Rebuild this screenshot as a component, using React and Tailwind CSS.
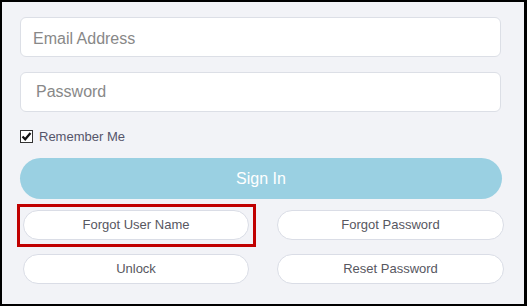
import React from 'react';

function CheckBox() {
    return (
        <span className="flex items-center justify-center w-[13px] h-[13px] border border-[#333] bg-white">
            <svg width="11" height="11" viewBox="0 0 11 11">
                <path d="M1.5 5.5 L4.2 8.3 L9.5 2" fill="none" stroke="#111" strokeWidth="2.2" />
            </svg>
        </span>
    );
}

function PillButton({ children }) {
    return (
        <button className="w-full h-[30px] rounded-full bg-white border border-[#dadde6] text-[13px] text-[#57575f]">
            {children}
        </button>
    );
}

export default function App() {
    return (
        <div className="w-[527px] h-[306px] bg-[#f2f3f7] border-t-2 border-l-2 border-r-[3px] border-b-2 border-black font-['Liberation_Sans',Arial,sans-serif]">
            <div className="pt-[15px] pl-[18px]">
                {/* Credentials */}
                <input
                    type="text"
                    placeholder="Email Address"
                    className="block w-[481px] h-[40px] px-[12px] pt-[4px] bg-white border border-[#dcdfe6] rounded-[6px] text-[16px] text-[#444] placeholder:text-[#888] outline-none"
                />
                <input
                    type="password"
                    placeholder="Password"
                    className="block mt-[15px] w-[481px] h-[40px] pl-[15px] pr-[12px] bg-white border border-[#dcdfe6] rounded-[6px] text-[16px] text-[#444] placeholder:text-[#888] outline-none"
                />

                <div className="flex items-center mt-[17px] h-[15px]">
                    <CheckBox />
                    <span className="ml-[6px] text-[13px] text-[#55556a]">Remember Me</span>
                </div>

                <button className="mt-[14px] w-[482px] h-[41px] rounded-full bg-[#9ad0e2] text-white text-[16px]">
                    Sign In
                </button>

                {/* Secondary actions */}
                <div className="mt-[11px] ml-[3px] grid grid-cols-[226px_227px] gap-x-[28px] gap-y-[14px]">
                    <div className="relative">
                        <PillButton>Forgot User Name</PillButton>
                        <div className="absolute -left-[6px] -top-[6px] -right-[7px] -bottom-[7px] border-[3px] border-[#c00000] pointer-events-none" />
                    </div>
                    <PillButton>Forgot Password</PillButton>
                    <PillButton>Unlock</PillButton>
                    <PillButton>Reset Password</PillButton>
                </div>
            </div>
        </div>
    );
}
